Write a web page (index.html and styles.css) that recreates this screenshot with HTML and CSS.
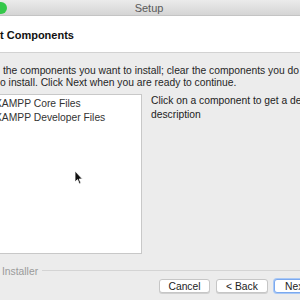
FILE: index.html
```html
<!DOCTYPE html>
<html lang="en">
<head>
    <meta charset="UTF-8">
    <title>Setup</title>
    <link rel="stylesheet" href="styles.css">
</head>
<body>
<div class="window">
    <div class="titlebar">
        <span class="light"></span>
        <span class="title">Setup</span>
    </div>

    <div class="header">
        <span class="header-text">t Components</span>
    </div>

    <div class="intro">
        <div class="intro-line first">the components you want to install; clear the components you do not want</div>
        <div class="intro-line">o install. Click Next when you are ready to continue.</div>
    </div>

    <div class="main">
        <div class="tree">
            <div class="tree-item">XAMPP Core Files</div>
            <div class="tree-item">XAMPP Developer Files</div>
            <!-- mouse pointer -->
            <svg class="cursor" width="9" height="15" viewBox="0 0 9 15">
                <path d="M1 1 L1 12 L3.5 9.6 L5.4 14 L7 13.3 L5.2 9 L8.4 9 Z" fill="#111" stroke="#fff" stroke-width="0.8"/>
            </svg>
        </div>
        <div class="desc">
            <div>Click on a component to get a detailed</div>
            <div>description</div>
        </div>
    </div>

    <div class="group">
        <span class="group-label">Installer</span>
        <span class="group-line"></span>
    </div>

    <div class="buttons">
        <button class="btn cancel">Cancel</button>
        <button class="btn back">&lt; Back</button>
        <button class="btn next">Next &gt;</button>
    </div>
</div>
</body>
</html>
```

FILE: styles.css
```css
html, body {
    margin: 0;
    padding: 0;
}

body {
    width: 300px;
    height: 300px;
    overflow: hidden;
    font-family: "Liberation Sans", Arial, sans-serif;
    font-size: 10.3px;
    color: #262626;
}

.window {
    width: 300px;
    height: 300px;
    background: #ececec;
    display: flex;
    flex-direction: column;
}

/* title bar */
.titlebar {
    position: relative;
    height: 16px;
    flex: none;
    background: linear-gradient(#ebebeb, #d5d5d5);
    border-bottom: 1px solid #c4c4c4;
    box-sizing: border-box;
    display: flex;
    justify-content: center;
    align-items: center;
}

.light {
    position: absolute;
    left: -5px;
    top: 2px;
    width: 12px;
    height: 12px;
    border-radius: 50%;
    background: #35c84b;
}

.title {
    font-size: 11px;
    color: #5a5a5a;
    margin-left: -2px;
}

/* white page header */
.header {
    height: 37px;
    flex: none;
    background: #fff;
    border-bottom: 1px solid #d2d2d2;
    display: flex;
    align-items: center;
    box-sizing: border-box;
    padding-top: 1px;
}

.header-text {
    font-weight: bold;
    font-size: 11px;
    color: #111;
}

.intro {
    padding-top: 12px;
    line-height: 12px;
    white-space: nowrap;
}

.intro-line.first {
    padding-left: 3px;
}

.main {
    display: flex;
    margin-top: 5px;
    height: 160px;
    flex: none;
}

.tree {
    position: relative;
    width: 150px;
    margin-left: -8px;
    flex: none;
    box-sizing: border-box;
    background: #fff;
    border: 1px solid #c8c8c8;
    padding: 2px 0 0 2px;
    line-height: 14px;
}

.tree-item {
    color: #333;
    white-space: nowrap;
}

.cursor {
    position: absolute;
    left: 81px;
    top: 75px;
}

.desc {
    margin-left: 9px;
    line-height: 14px;
    white-space: nowrap;
    color: #222;
}

.group {
    display: flex;
    align-items: center;
    gap: 4px;
    margin-top: 12px;
    padding-left: 2px;
}

.group-label {
    color: #9a9a9a;
}

.group-line {
    flex: 1;
    height: 1px;
    background: #d4d4d4;
    margin-top: -3px;
}

.buttons {
    display: flex;
    gap: 6px;
    margin-top: 2px;
    padding-left: 159px;
    white-space: nowrap;
}

.btn {
    flex: none;
    font-family: "Liberation Sans", Arial, sans-serif;
    font-size: 10.3px;
    color: #222;
    height: 14px;
    padding: 0;
    background: #fff;
    border: 1px solid #c6c6c6;
    border-radius: 3px;
    box-shadow: 0 1px 0 #d0d0d0;
}

.cancel {
    width: 51px;
}

.back {
    width: 52px;
}

.next {
    width: 52px;
    border-color: #7ba9ef;
    box-shadow: 0 0 0 1px #a9c8f5;
}
```
